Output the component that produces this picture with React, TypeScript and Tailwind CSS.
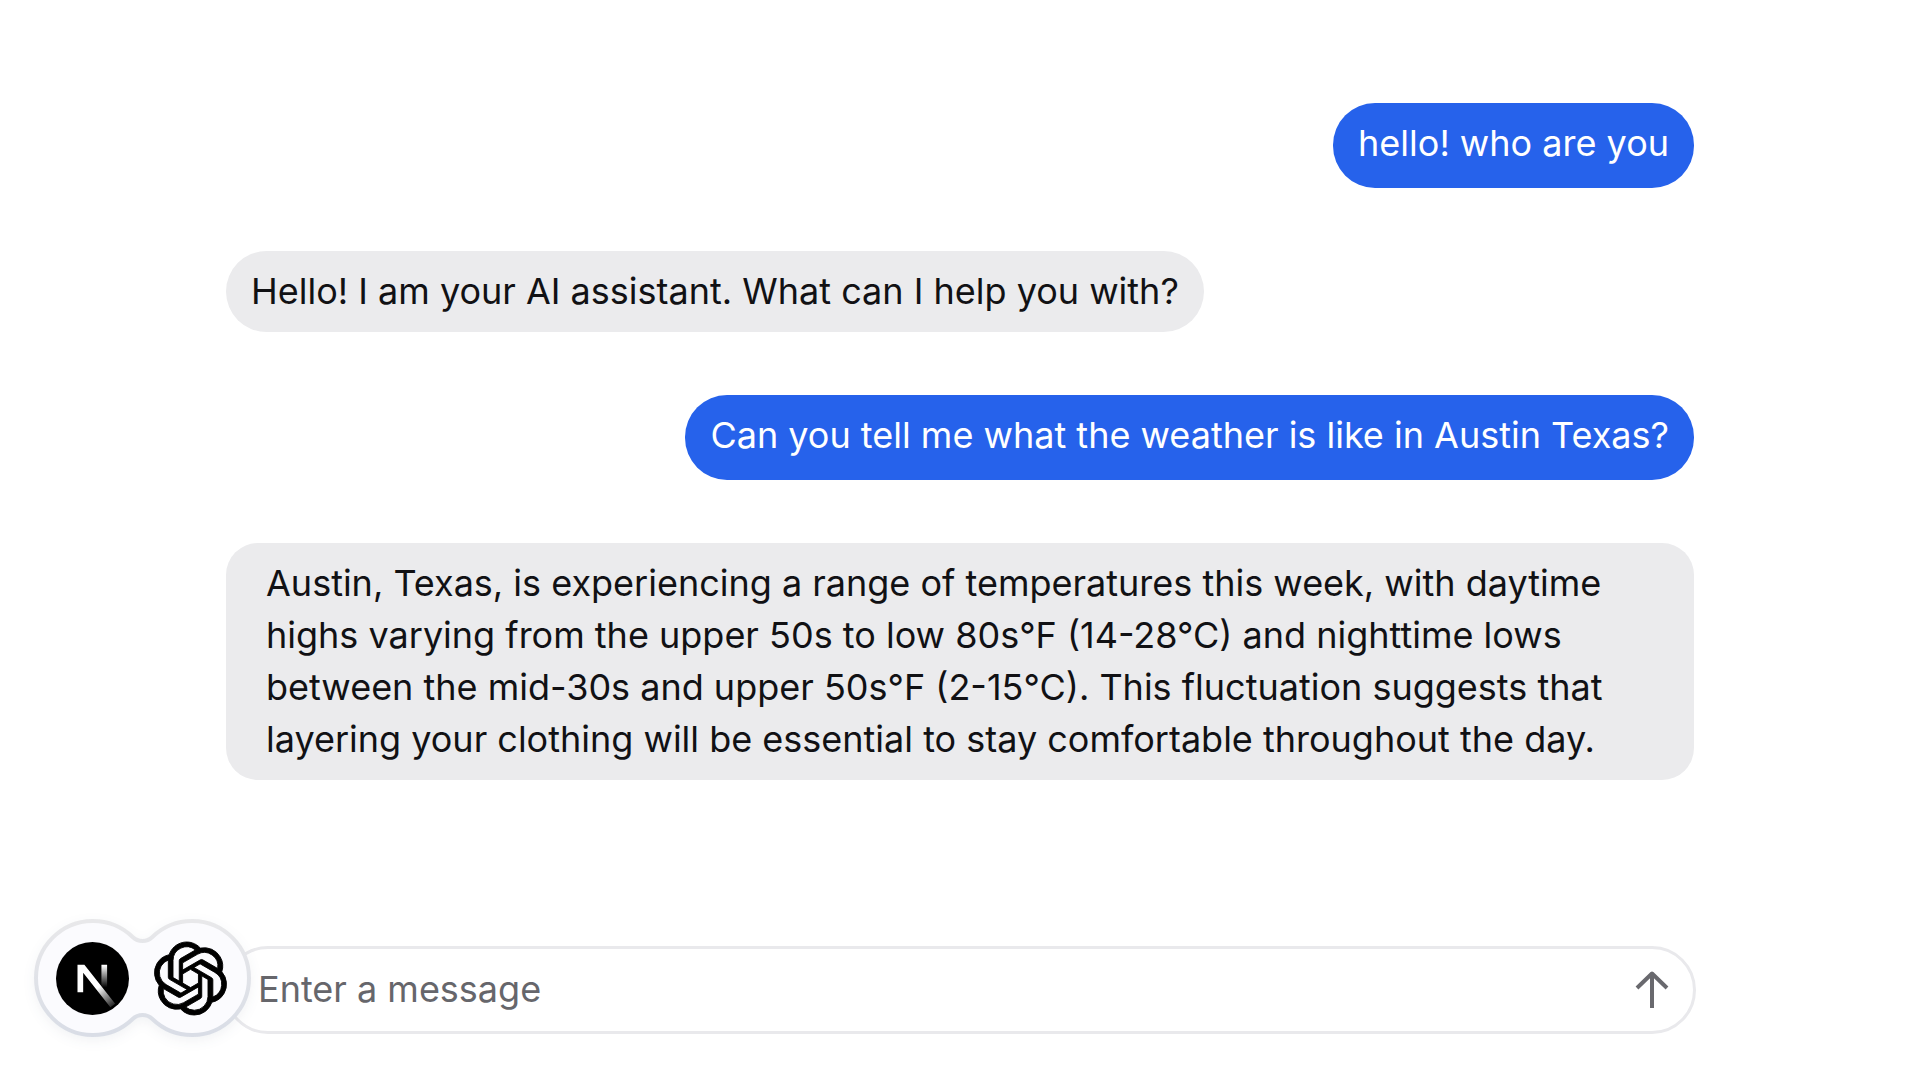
import { SiOpenai } from "react-icons/si";

type Message = { role: "user" | "assistant"; text: string; long?: boolean };

const messages: Message[] = [
  { role: "user", text: "hello! who are you" },
  { role: "assistant", text: "Hello! I am your AI assistant. What can I help you with?" },
  { role: "user", text: "Can you tell me what the weather is like in Austin Texas?" },
  {
    role: "assistant",
    long: true,
    text: "Austin, Texas, is experiencing a range of temperatures this week, with daytime highs varying from the upper 50s to low 80s°F (14-28°C) and nighttime lows between the mid-30s and upper 50s°F (2-15°C). This fluctuation suggests that layering your clothing will be essential to stay comfortable throughout the day.",
  },
];

function Bubble({ role, text, long }: Message) {
  if (role === "user") {
    return (
      <li className="self-end rounded-[42px] bg-[#2662eb] px-[25px] pt-[14px] pb-[19px] text-white">
        {text}
      </li>
    );
  }
  if (long) {
    return <li className="rounded-[32px] bg-[#ebebed] px-10 pt-[14px] pb-[15px]">{text}</li>;
  }
  return <li className="self-start rounded-[42px] bg-[#ebebed] px-[25px] pt-[14px] pb-[15px]">{text}</li>;
}

function NextLogo() {
  return (
    <svg viewBox="0 0 180 180" className="size-[73px]" aria-label="Next.js" role="img">
      <defs>
        <linearGradient id="diag" x1="104" y1="112" x2="142" y2="160" gradientUnits="userSpaceOnUse">
          <stop stopColor="#fff" />
          <stop offset="1" stopColor="#fff" stopOpacity="0.1" />
        </linearGradient>
        <linearGradient id="bar" x1="120" y1="58" x2="120" y2="112" gradientUnits="userSpaceOnUse">
          <stop stopColor="#fff" />
          <stop offset="1" stopColor="#fff" stopOpacity="0" />
        </linearGradient>
        <clipPath id="disc">
          <circle cx="90" cy="90" r="90" />
        </clipPath>
      </defs>
      <circle cx="90" cy="90" r="90" fill="#000" />
      <g clipPath="url(#disc)">
        <path d="M53 56H70L146 152L134 161L67 76V124H53Z" fill="url(#diag)" />
        <path d="M112 56h14v56h-14z" fill="url(#bar)" />
      </g>
    </svg>
  );
}

function StackBadge() {
  return (
    <div className="absolute top-1/2 -left-[197px] h-[126px] w-[225px] -translate-y-[75px]">
      <svg viewBox="0 0 225 126" className="absolute inset-0 size-full drop-shadow-[0_4px_6px_rgba(40,50,90,0.06)]" aria-hidden="true">
        <defs>
          <linearGradient id="edge" x1="0" y1="0" x2="0" y2="1">
            <stop stopColor="#e8e8ea" />
            <stop offset="1" stopColor="#d9dde6" />
          </linearGradient>
        </defs>
        <path
          d="M102.6 22A14.25 14.25 0 0 0 122.4 22A57 57 0 1 1 122.4 104A14.25 14.25 0 0 0 102.6 104A57 57 0 1 1 102.6 22Z"
          fill="#fbfbfe"
          stroke="url(#edge)"
          strokeWidth="4"
        />
      </svg>
      <div className="relative flex h-full items-center gap-[25px] pl-[26px]">
        <NextLogo />
        <SiOpenai
          className="size-[73px] overflow-visible stroke-current text-black [stroke-width:0.3px]"
          aria-label="OpenAI"
        />
      </div>
    </div>
  );
}

export default function App() {
  return (
    <main className="flex min-h-screen flex-col items-center bg-white pt-[103px] pb-[46px] font-['Inter',sans-serif] text-[36px] leading-[52px] text-[#111114]">
      <ul className="flex w-full max-w-[1468px] flex-col gap-[63px]">
        {messages.map((m) => (
          <Bubble key={m.text} {...m} />
        ))}
      </ul>
      <form
        className="relative mt-auto flex w-full max-w-[1472px] items-center rounded-full border-[3px] border-[#e9e9ec] bg-white pt-[14px] pr-[21px] pb-4 pl-[31px]"
        onSubmit={(e) => e.preventDefault()}
      >
        <input
          type="text"
          aria-label="Message"
          placeholder="Enter a message"
          className="min-w-0 flex-1 bg-transparent outline-none placeholder:text-[#66666b]"
        />
        <button type="submit" aria-label="Send" className="text-[#69696e]">
          <svg viewBox="0 0 40 40" className="size-10" fill="none" stroke="currentColor" strokeWidth="4">
            <path d="M20 39V5M5 19L20 4.500L35 19" strokeLinejoin="round" />
          </svg>
        </button>
        <StackBadge />
      </form>
    </main>
  );
}
